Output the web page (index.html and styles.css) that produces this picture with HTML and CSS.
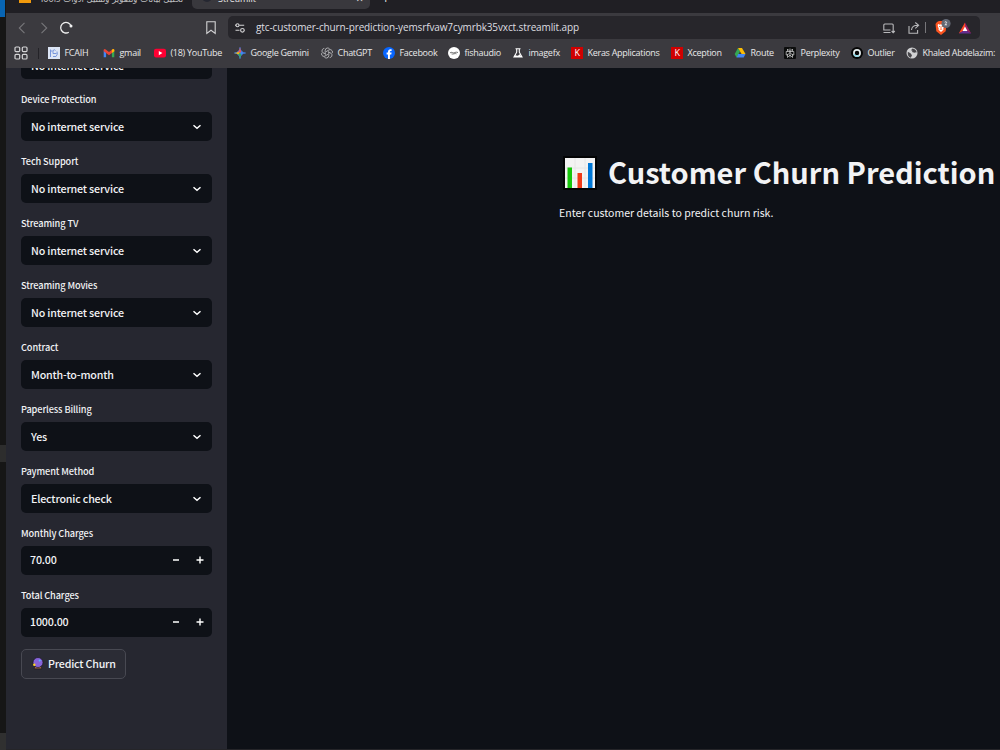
FILE: index.html
```html
<!DOCTYPE html>
<html lang="en">
<head>
<meta charset="utf-8">
<title>Streamlit</title>
<link rel="stylesheet" href="styles.css">
</head>
<body>
<div class="desktop">
  <aside class="edge"><i class="edge-blue"></i><i class="edge-mark"></i><i class="edge-foot"></i></aside>
  <div class="window">
    <div class="tabs">
      <div class="tab first"><svg class="tab-icon" viewBox="0 0 12 12"><rect width="12" height="12" fill="#f29a0c"/><path d="M4 5v3h4V5" fill="none" stroke="#5b3a05" stroke-width="1.5"/></svg><span class="arabic" dir="rtl">تحليل بيانات وتصوير وتمثيل أدوات Tools</span></div>
      <div class="tab active"><svg class="tab-icon" viewBox="0 0 12 12"><circle cx="6" cy="6" r="5" fill="#252731"/></svg><span>Streamlit</span><b>×</b></div>
      <div class="plus">+</div>
    </div>
    <div class="toolbar">
      <div class="nav">
        <svg class="back" viewBox="0 0 12 12"><path d="M8.500 .8 3.300 6 8.500 11.200"/></svg>
        <svg class="forward" viewBox="0 0 12 12"><path d="M3.500 .8 8.700 6 3.500 11.200"/></svg>
        <svg class="reload" viewBox="0 0 14 14"><path d="M9.800 11.200A5.300 5.300 0 1 1 12 5"/><circle cx="12" cy="4.900" r="1.500"/></svg>
        <svg class="save" viewBox="0 0 12 14"><path d="M1.800 .8h8.400v11.600L6 9.200l-4.200 3.200z"/></svg>
      </div>
      <div class="address">
        <svg class="tune" viewBox="0 0 12 12"><path d="M1 3.300h1M5.200 3.300h5M1.500 8.300h4M10.500 8.300h.5"/><circle cx="3.500" cy="3.300" r="1.500"/><circle cx="8.400" cy="8.300" r="1.800"/></svg>
        <span class="url">gtc-customer-churn-prediction-yemsrfvaw7cymrbk35vxct.streamlit.app</span>
        <svg class="install" viewBox="0 0 14 12"><path d="M8.500 10.500H1.500M8.500 8H1.800V3q0-1 1-1h7.400q1 0 1 1v4M11.200 7v3.500M9.600 9l1.600 1.700L12.800 9"/></svg>
        <svg class="share" viewBox="0 0 14 14"><path d="M2 5v7.200h8.600V9M4.500 9c.3-3.300 2.500-4.700 6.300-4.700M8.300 1.500l3.300 2.800-3.300 3"/></svg>
        <i class="divider"></i>
        <svg class="shield" viewBox="0 0 18 18"><path d="m4 3 2-1h4l2 1 1.500 2-.8 7.200L8 16l-4.700-3.800L2.500 5z" fill="#fb5420"/><path d="m5 5 2 .7L8 5l1 .7L11 5l.3 2-1 2.500.2 1.200L8 13l-2.500-2.300.2-1.200-1-2.500z" fill="#fff"/><path d="M6 7.500h1.200M8.800 7.500H10M8 7.500v2.200M6.800 10.500 8 10l1.200.5" stroke="#fb5420" stroke-width=".8" fill="none"/><circle cx="13" cy="4.500" r="4.600" fill="#626773"/><path d="M11.700 3.200q1.600-1.200 2 .1.200.8-1.900 2.500h2.200" fill="none" stroke="#eee" stroke-width=".9"/></svg>
        <svg class="bat" viewBox="0 0 14 12"><path d="M7 .5.8 11.400 7 8z" fill="#ff4724"/><path d="m7 .5 6.200 10.900L7 8z" fill="#9e1f63"/><path d="M.8 11.400h12.400L7 7.800z" fill="#662d91"/><path d="M7 4.600 4.600 9h4.800z" fill="#fff"/></svg>
      </div>
    </div>
    <div class="bookmarks">
      <svg class="apps" viewBox="0 0 14 14"><rect x="1" y="1" width="4.700" height="4.700" rx="1.100"/><rect x="8.300" y="1" width="4.700" height="4.700" rx="1.100"/><rect x="1" y="8.300" width="4.700" height="4.700" rx="1.100"/><rect x="8.300" y="8.300" width="4.700" height="4.700" rx="1.100"/></svg>
      <i class="bar"></i>
      <a><svg viewBox="0 0 12 12"><rect width="12" height="12" fill="#dce5f5"/><path d="M2.500 2.500v7.500M2.500 4h2M5 6.500v-3q2-1.500 2.500 0M5 6.500h3.500M5 9.500h3q2-2 1-5" fill="none" stroke="#7896dc" stroke-width="1"/></svg>FCAIH</a>
      <a><svg viewBox="0 0 12 12"><path d="M.7 10.200V3.500l2.400 1.800v4.900z" fill="#4285f4"/><path d="M8.900 10.200V5.300l2.400-1.800v6.700z" fill="#34a853"/><path d="M.7 4.200V2.800q.8-1.200 2-.4L6 4.900l3.300-2.500q1.300-.8 2 .4v1.400L6 8.200z" fill="#ea4335"/><path d="M8.900 2.700q2-1.300 2.400.3v1.200L8.900 6z" fill="#fbbc04"/></svg>gmail</a>
      <a><svg viewBox="0 0 12 12"><rect y="1.800" width="12" height="8.600" rx="2" fill="#ff0033"/><path d="m4.800 4 3.600 2.100-3.600 2.100z" fill="#fff"/></svg>(18) YouTube</a>
      <a><svg viewBox="0 0 12 12"><path d="M6 .3Q6.500 5.500 11.700 6 6.500 6.500 6 11.700 5.500 6.500.3 6 5.500 5.500 6 .3" fill="#4285f4" stroke="#4285f4" stroke-width=".6"/><path d="M6 .3Q5.500 4.500 3.500 5L6 6l1.300-1.500Q6.300 3 6 .3" fill="#ef5350"/><path d="M.3 6Q3 6.300 4.500 7.500L6 6 4 4.900Q2.500 5.800.3 6" fill="#fbbc04"/><path d="M6 11.700Q5.700 8.800 4.200 7.300L6 6l1.300 1.700Q6.300 9 6 11.700" fill="#34a853"/></svg>Google Gemini</a>
      <a><svg viewBox="0 0 12 12" class="line"><path d="M4.200 7V3.300Q4.500 1 6.500 1q1.500 0 2.200 1M7.800 5v3.700Q7.500 11 5.500 11q-1.500 0-2.200-1M5 4.700l3.200-1.900q2-.8 3 1 .6 1.400-.1 2.400M7 7.300 3.800 9.200q-2 .8-3-1Q.3 6.800.9 5.800M6.900 4.500l3.300 1.900q1.500 1.300.5 3-.7 1-2 1.200M5.100 7.500 1.800 5.600Q.3 4.300 1.300 2.600q.7-1 2-1.200"/></svg>ChatGPT</a>
      <a><svg viewBox="0 0 12 12"><circle cx="6" cy="6" r="6" fill="#0866ff"/><path d="M5 12V7.500H3.600V5.600H5V4.700q0-2.500 2.500-2.500h1.100V4H7.700q-.8 0-.8.900v.7h1.700l-.3 1.900H6.900V12z" fill="#fff"/></svg>Facebook</a>
      <a><svg viewBox="0 0 12 12"><circle cx="6" cy="6" r="6" fill="#fff"/><path d="M2 6q1-1.200 2.200-.5t2.600 0T10 5.500M3.500 6.900q1.200.4 2.500-.1t2.500 0" fill="none" stroke="#555" stroke-width=".8"/></svg>fishaudio</a>
      <a><svg viewBox="0 0 12 12"><path d="M3.500 1.800h5M4.700 2v3.200L2 10h8L7.300 5.200V2" fill="none" stroke="#fff" stroke-width="1.100"/><path d="m3 8.300 3 .4 1.500-1.500L10 10H2z" fill="#fff"/></svg>imagefx</a>
      <a><i class="keras">K</i>Keras Applications</a>
      <a><i class="keras">K</i>Xception</a>
      <a><svg viewBox="0 0 12 12"><path d="M4 1 .7 7 2.500 10.500 6 4.500z" fill="#34a853"/><path d="M4 1h4l3.500 6H7.600z" fill="#fbbc04"/><path d="M4.200 7h7.300l-1.800 3.500H2.500z" fill="#4285f4"/></svg>Route</a>
      <a><svg viewBox="0 0 12 12"><rect width="12" height="12" rx="1" fill="#0c0d0d"/><path d="M6 1.500v9M3.500 2 6 4.500 8.500 2v2.500M3.500 2v2.500M2.200 4.500h7.600V8H8.500L6 5.500 3.500 8H2.200zM3.500 7v3.500L6 8l2.500 2.500V7" fill="none" stroke="#ccc" stroke-width=".75"/></svg>Perplexity</a>
      <a><svg viewBox="0 0 12 12"><circle cx="6" cy="6" r="6" fill="#050505"/><circle cx="6" cy="6" r="3.100" fill="none" stroke="#e7eef0" stroke-width="1.700"/><path d="M3 7a3.100 3.100 0 0 0 5 1.400" fill="none" stroke="#7ed4e6" stroke-width="1.300"/></svg>Outlier</a>
      <a><svg viewBox="0 0 12 12"><circle cx="6" cy="6" r="5.500" fill="#d0d1d3"/><path d="M1.800 4.800 4.500 6.300 6 8.200 4.800 10.800Q1.200 9.800 1.800 4.800M6.500 1.500 5 3.200l1.500.6L6 5l2.500.8L10 5.300l.8.200Q10 2 6.500 1.500" fill="#47464a"/></svg>Khaled Abdelazim:</a>
    </div>
    <div class="app">
      <section class="sidebar">
        <div class="scrolled"><div class="box">No internet service</div></div>
        <div class="field"><label>Device Protection</label><div class="box">No internet service<svg class="chevron" viewBox="0 0 8 6"><path d="m.5 1.200 3.500 3 3.500-3"/></svg></div></div>
        <div class="field"><label>Tech Support</label><div class="box">No internet service<svg class="chevron" viewBox="0 0 8 6"><path d="m.5 1.200 3.500 3 3.500-3"/></svg></div></div>
        <div class="field"><label>Streaming TV</label><div class="box">No internet service<svg class="chevron" viewBox="0 0 8 6"><path d="m.5 1.200 3.500 3 3.500-3"/></svg></div></div>
        <div class="field"><label>Streaming Movies</label><div class="box">No internet service<svg class="chevron" viewBox="0 0 8 6"><path d="m.5 1.200 3.500 3 3.500-3"/></svg></div></div>
        <div class="field"><label>Contract</label><div class="box">Month-to-month<svg class="chevron" viewBox="0 0 8 6"><path d="m.5 1.200 3.500 3 3.500-3"/></svg></div></div>
        <div class="field"><label>Paperless Billing</label><div class="box">Yes<svg class="chevron" viewBox="0 0 8 6"><path d="m.5 1.200 3.500 3 3.500-3"/></svg></div></div>
        <div class="field"><label>Payment Method</label><div class="box">Electronic check<svg class="chevron" viewBox="0 0 8 6"><path d="m.5 1.200 3.500 3 3.500-3"/></svg></div></div>
        <div class="field"><label>Monthly Charges</label><div class="box number">70.00<svg class="steps" viewBox="0 0 32 8"><path d="M1 4h6M24.500 4h7M28 .5v7"/></svg></div></div>
        <div class="field"><label>Total Charges</label><div class="box number">1000.00<svg class="steps" viewBox="0 0 32 8"><path d="M1 4h6M24.500 4h7M28 .5v7"/></svg></div></div>
        <button class="predict"><svg viewBox="0 0 12 13"><path d="M3 9.500h6l.8 2.300H2.200z" fill="#c77c50" stroke="#17151c" stroke-width=".7"/><circle cx="6" cy="5.500" r="5" fill="#8664d8" stroke="#17151c" stroke-width=".7"/><path d="m7.800 2 .4 1.200 1.200.4-1.200.4-.4 1.200-.4-1.200-1.200-.4 1.200-.4z" fill="#50c8ff"/><circle cx="2.300" cy="7.700" r="1.200" fill="#ffd51e"/></svg>Predict Churn</button>
      </section>
      <main class="main">
        <h1><svg viewBox="0 0 34 34"><rect width="34" height="34" fill="#030405"/><rect x="2" y="2" width="30" height="30" fill="#f3f3f3"/><path d="M2 12h30M2 22h30M12 2v30M22 2v30" stroke="#e6e6e6"/><rect x="4.500" y="11.500" width="4.500" height="20.500" fill="#16c60c"/><rect x="14.500" y="17" width="4.500" height="15" fill="#f03a17"/><rect x="25" y="7" width="4.500" height="25" fill="#0078d7"/></svg><span>Customer Churn Prediction</span></h1>
        <p>Enter customer details to predict churn risk.</p>
      </main>
    </div>
  </div>
</div>
</body>
</html>
```
FILE: styles.css
```css
* { box-sizing: border-box; }
body { margin: 0; background: #151515; overflow: hidden; }
svg { display: block; flex: none; }
.desktop { display: flex; width: 1000px; height: 750px; }
.edge { width: 6px; display: flex; flex-direction: column; background: #161616; }
.edge-blue { height: 17px; width: 5px; background: #0865b4; }
.edge-mark { height: 17px; margin-top: 428px; background: #2d2d2d; }
.edge-foot { height: 17px; margin-top: auto; background: #303030; }
.window { flex: 1; min-width: 0; display: flex; flex-direction: column; font-family: "Open Sans", "Noto Sans", sans-serif; font-size: 9px; color: #e9e9ea; }
.tabs { height: 13px; background: #201f24; display: flex; overflow: hidden; flex: none; }
.tab { height: 13px; display: flex; gap: 7px; }
.tab span, .tab b { height: 12px; line-height: 12px; margin-top: -7px; white-space: nowrap; }
.tab-icon { width: 12px; height: 12px; margin-top: -9px; }
.first { width: 186px; padding-left: 13px; }
.tab .arabic { width: 145px; margin-top: -7px; font-family: "DejaVu Sans", sans-serif; font-size: 8.5px; color: #bcbcbe; text-align: right; }
.active { width: 178px; height: 9px; padding-left: 9px; border-radius: 0 0 5px 5px; background: #39383d; }
.active .tab-icon { margin-right: -2px; }
.tab b { margin-left: auto; margin-right: 7px; font: 12px/12px "Open Sans", sans-serif; }
.plus { margin: -8px 0 0 12px; font-size: 13px; line-height: 13px; }
.toolbar { height: 27px; background: #3b3a3f; display: flex; padding-top: 3px; flex: none; }
.nav { width: 222px; height: 23px; display: flex; align-items: center; padding-left: 10px; }
.nav svg, .tune, .install, .share { fill: none; stroke: #d3d3d5; stroke-width: 1.1; }
.back, .forward { width: 12px; height: 12px; }
.nav .back, .nav .forward { stroke: #77767a; }
.forward { margin-left: 10px; }
.reload { width: 14px; height: 14px; margin-left: 9px; }
.nav .reload { stroke: #f0f0f0; stroke-width: 1.3; }
.nav .reload circle { fill: #f0f0f0; stroke: none; }
.save { width: 12px; height: 14px; margin-left: 132px; }
.address { width: 752px; height: 23px; border-radius: 5px; background: #27262b; display: flex; align-items: center; padding: 0 8px 0 6px; }
.tune { width: 12px; height: 12px; }
.url { flex: 1; height: 22px; margin-left: 10px; font-size: 10px; letter-spacing: -.12px; line-height: 20px; color: #dedee0; white-space: nowrap; }
.address .install { width: 14px; height: 12px; margin-right: 11px; stroke: #b8b8bb; }
.address .share { width: 14px; height: 14px; margin-right: 4px; stroke: #b8b8bb; }
.divider { width: 1px; height: 11px; background: #77767a; margin-right: 7px; }
.shield { width: 18px; height: 18px; margin-right: 7px; }
.bat { width: 14px; height: 12px; }
.bookmarks { height: 28px; flex: none; background: #3b3a3f; display: grid; grid-template-columns: 24px 18px 55px 51px 80px 87px 62px 65px 64px 59px 100px 63px 50px 67px 55px 94px; align-items: center; padding-bottom: 2px; }
.apps { width: 14px; height: 14px; margin-left: 8px; fill: none; stroke: #d5d5d7; stroke-width: 1.2; }
.bar { width: 1px; height: 11px; background: #242328; margin-left: 8px; }
.bookmarks a { display: flex; align-items: center; gap: 4.5px; white-space: nowrap; line-height: 14px; letter-spacing: -.28px; }
.bookmarks a svg, .keras { width: 12px; height: 12px; flex: none; }
.line { fill: none; stroke: #c9c9cb; stroke-width: .8; }
.keras { background: #d00000; color: #fff; font: 9px/12px "Open Sans", sans-serif; text-align: center; }
.app { flex: 1; min-height: 0; display: flex; overflow: hidden; background: #0e1117; font-family: "Noto Sans CJK SC", sans-serif; color: #f2f3f5; border-bottom: 1px solid #252529; }
.sidebar { width: 221px; padding: 0 15px; background: #262730; }
.field { height: 62px; padding-top: 11px; }
.scrolled { height: 29px; margin-top: -18px; }
.scrolled .box { padding-top: 3px; }
.field label { display: block; height: 18px; margin-bottom: 4px; font-size: 9.2px; line-height: 19px; font-weight: 500; letter-spacing: -.1px; white-space: nowrap; }
.box { height: 29px; border-radius: 5px; background: #0e1117; padding: 0 11px 0 10px; display: flex; align-items: center; justify-content: space-between; font-size: 10.7px; font-weight: 500; letter-spacing: -.18px; line-height: 26px; }
.number { padding: 0 8px 1px 9px; }
.chevron { width: 8px; height: 6px; fill: none; stroke: #fff; stroke-width: 1.5; }
.steps { width: 32px; height: 8px; fill: none; stroke: #fff; stroke-width: 1.4; }
.predict { display: flex; align-items: center; gap: 4px; width: 105px; height: 30px; margin-top: 12px; padding: 0 0 1px 10px; background: #2b2c35; border: 1px solid #484952; border-radius: 5px; color: #f2f3f5; font: 500 10.7px/24px "Noto Sans CJK SC", sans-serif; letter-spacing: -.2px; white-space: nowrap; }
.predict svg { width: 12px; height: 13px; }
.main { flex: 1; min-width: 0; padding: 80px 0 0 332px; }
.main h1 { margin: 0; height: 50px; display: flex; align-items: center; padding-left: 4px; font-size: 29px; font-weight: 700; line-height: 46px; white-space: nowrap; }
.main h1 svg { width: 34px; height: 34px; margin-right: 11px; }
.main h1 span { padding-bottom: 4px; }
.main p { margin: 5px 0 0; font-size: 10.55px; line-height: 20px; white-space: nowrap; }
```
